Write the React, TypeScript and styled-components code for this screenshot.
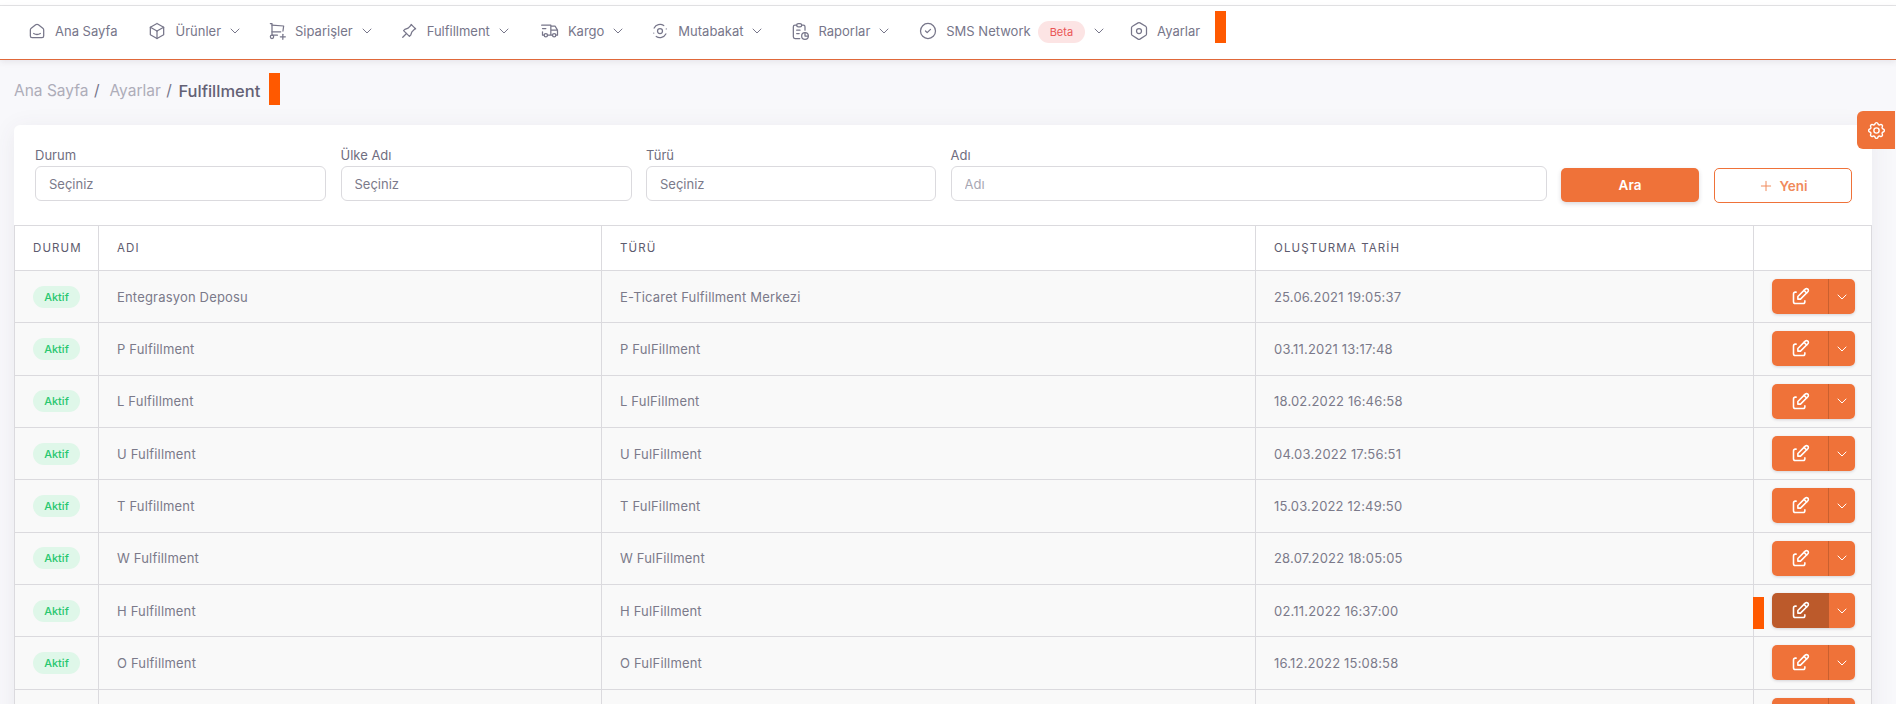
import { ReactNode } from "react";
import styled, { createGlobalStyle } from "styled-components";
import {
  TbSmartHome,
  TbBox,
  TbShoppingCartPlus,
  TbPin,
  TbTruckDelivery,
  TbReport,
  TbCircleCheck,
  TbChevronDown,
  TbSettings,
  TbSettings2,
  TbEdit,
  TbPlus,
} from "react-icons/tb";

const GlobalStyle = createGlobalStyle`
  html, body {
    margin: 0;
    padding: 0;
    height: 704px;
    overflow: hidden;
    background: #f8f8fb;
    font-family: Inter, "Liberation Sans", sans-serif;
    color: #7b7a8a;
  }
`;

const Page = styled.div`
  position: relative;
  width: 1896px;
  height: 704px;
  overflow: hidden;
`;

const TopStrip = styled.div`
  height: 5px;
  background: #fff;
  border-bottom: 1px solid #e4e4e6;
`;

const Nav = styled.nav`
  position: relative;
  display: flex;
  align-items: center;
  box-sizing: content-box;
  height: 49px;
  padding: 0 0 4px 27px;
  background: #fff;
  border-bottom: 1px solid #e0683a;
  box-shadow: 0 2px 6px rgba(75, 70, 92, 0.1);
`;

const NavItem = styled.div<{ $gap: number }>`
  display: flex;
  align-items: center;
  margin-right: ${({ $gap }) => $gap}px;
  font-size: 13px;
  color: #77768a;
  white-space: nowrap;

  > svg:first-child {
    width: 20px;
    height: 20px;
    margin-right: 8px;
    stroke-width: 1.5;
  }
`;

const Caret = styled(TbChevronDown)`
  width: 16px;
  height: 16px;
  margin-left: 6px;
  stroke-width: 1.5;
`;

const BetaBadge = styled.span`
  margin: 2px 0 0 7px;
  padding: 0 12px;
  height: 22px;
  line-height: 22px;
  border-radius: 11px;
  background: #fce4e4;
  color: #ea5455;
  font-size: 11px;
`;

const Marker = styled.div`
  width: 11px;
  height: 32px;
  background: #ff5900;
`;

const NavMarker = styled(Marker)`
  margin-bottom: 7px;
`;

const Breadcrumb = styled.div`
  display: flex;
  align-items: center;
  gap: 9px;
  height: 32px;
  margin-top: 13px;
  padding-left: 14px;
`;

const Trail = styled.div`
  display: flex;
  align-items: center;
  gap: 5.5px;
  margin-top: 3px;
  font-size: 15.5px;
  color: #75748a;
`;

const CrumbLink = styled.span`
  color: #aeadb9;
`;

const CrumbCurrent = styled.span`
  margin-left: 1px;
  font-size: 16.5px;
  font-weight: 500;
  color: #636175;
`;

const Card = styled.section`
  width: 1858px;
  margin: 20px 0 0 14px;
  background: #fff;
  border-radius: 6px 6px 0 0;
  box-shadow: 0 4px 24px rgba(75, 70, 92, 0.08);
`;

const Filters = styled.div`
  display: flex;
  align-items: flex-end;
  height: 100px;
  padding: 0 20px 24px 21px;
  box-sizing: border-box;
`;

const Field = styled.label<{ $width: number }>`
  display: flex;
  flex: none;
  flex-direction: column;
  gap: 3px;
  width: ${({ $width }) => $width}px;
  margin-right: 14.5px;
  font-size: 13px;
  color: #6f6e80;
`;

const Input = styled.input`
  box-sizing: border-box;
  width: 100%;
  height: 35px;
  padding: 0 13px;
  border: 1px solid #dbdade;
  border-radius: 6px;
  background: #fff;
  font: 13px Inter, "Liberation Sans", sans-serif;
  color: #7b7a8a;
  outline: none;

  &::placeholder {
    color: #a8a7b3;
  }
`;

const SearchButton = styled.button`
  flex: none;
  width: 138px;
  height: 34px;
  margin: 0 15px -1px 0;
  border: 0;
  border-radius: 5px;
  background: #ef7239;
  box-shadow: 0 2px 4px rgba(75, 70, 92, 0.2);
  color: #fff;
  font: 600 13.5px Inter, "Liberation Sans", sans-serif;
`;

const NewButton = styled.button`
  display: flex;
  flex: none;
  align-items: center;
  justify-content: center;
  gap: 5px;
  width: 138px;
  height: 35px;
  margin-bottom: -2px;
  border: 1px solid #ef7239;
  border-radius: 5px;
  background: #fff;
  color: #f08a5c;
  font: 600 13.5px Inter, "Liberation Sans", sans-serif;

  svg {
    width: 16px;
    height: 16px;
    stroke-width: 1.5;
  }
`;

const Table = styled.table`
  width: 1858px;
  table-layout: fixed;
  border-collapse: collapse;
  font-size: 13px;

  th,
  td {
    border: 1px solid #dbdade;
    padding: 0 18px;
    text-align: left;
  }

  th {
    height: 44px;
    font-size: 11.5px;
    font-weight: 400;
    letter-spacing: 1.1px;
    color: #5d5b6e;
  }

  td {
    height: 51.33px;
    background: #f9f9f9;
    color: #7b7a8a;
    letter-spacing: 0.18px;
  }

  th:first-child,
  td:first-child {
    padding: 0 0 0 18px;
  }
`;

const StatusBadge = styled.span`
  display: block;
  width: 47px;
  height: 22px;
  line-height: 22px;
  border-radius: 11px;
  background: #dff7e9;
  color: #28c76f;
  font-size: 11px;
  font-weight: 500;
  letter-spacing: 0;
  text-align: center;
`;

const ActionGroup = styled.div`
  display: flex;
  width: 83px;
  height: 35px;
  border-radius: 5px;
  overflow: hidden;
  box-shadow: 0 1px 3px rgba(75, 70, 92, 0.2);
`;

const EditButton = styled.button<{ $hover?: boolean }>`
  display: flex;
  align-items: center;
  justify-content: center;
  width: 57px;
  padding: 0;
  border: 0;
  border-right: 1px solid ${({ $hover }) => ($hover ? "#bc5a2b" : "#c9602f")};
  background: ${({ $hover }) => ($hover ? "#bc5a2b" : "#ef7239")};
  color: #fff;

  svg {
    width: 21px;
    height: 21px;
    stroke-width: 1.8;
  }
`;

const MenuButton = styled.button`
  display: flex;
  align-items: center;
  justify-content: center;
  flex: 1;
  padding: 0;
  border: 0;
  background: #ef7239;
  color: #fff;

  svg {
    width: 16px;
    height: 16px;
    stroke-width: 1.5;
  }
`;

const RowMarker = styled(Marker)`
  position: absolute;
  left: 1753px;
  top: 597px;
`;

const SettingsTab = styled.div`
  position: absolute;
  left: 1857px;
  top: 111px;
  display: flex;
  align-items: center;
  justify-content: center;
  width: 38px;
  height: 38px;
  border-radius: 6px 0 0 6px;
  background: #ef7239;
  color: #fff;

  svg {
    width: 21px;
    height: 21px;
    stroke-width: 1.6;
  }
`;

// mutabakat: broken ring round a small circle
const ReconcileIcon = () => (
  <svg viewBox="0 0 24 24" fill="none" stroke="currentColor" strokeLinecap="round" strokeLinejoin="round">
    <circle cx="12" cy="12" r="3" />
    <path d="M5 8.5a8 8 0 0 1 11.5 -3" />
    <path d="M19 15.5a8 8 0 0 1 -11.5 3" />
    <path d="M19.5 9.5v.01" />
    <path d="M4.5 14.5v.01" />
  </svg>
);

type MenuEntry = { icon: ReactNode; label: string; caret?: boolean; beta?: boolean; gap: number };

const menu: MenuEntry[] = [
  { icon: <TbSmartHome />, label: "Ana Sayfa", gap: 30 },
  { icon: <TbBox />, label: "Ürünler", caret: true, gap: 24 },
  { icon: <TbShoppingCartPlus />, label: "Siparişler", caret: true, gap: 24 },
  { icon: <TbPin />, label: "Fulfillment", caret: true, gap: 28 },
  { icon: <TbTruckDelivery />, label: "Kargo", caret: true, gap: 24 },
  { icon: <ReconcileIcon />, label: "Mutabakat", caret: true, gap: 25 },
  { icon: <TbReport />, label: "Raporlar", caret: true, gap: 26 },
  { icon: <TbCircleCheck />, label: "SMS Network", caret: true, beta: true, gap: 22 },
  { icon: <TbSettings2 />, label: "Ayarlar", gap: 15 },
];

const rows = [
  ["Entegrasyon Deposu", "E-Ticaret Fulfillment Merkezi", "25.06.2021 19:05:37"],
  ["P Fulfillment", "P FulFillment", "03.11.2021 13:17:48"],
  ["L Fulfillment", "L FulFillment", "18.02.2022 16:46:58"],
  ["U Fulfillment", "U FulFillment", "04.03.2022 17:56:51"],
  ["T Fulfillment", "T FulFillment", "15.03.2022 12:49:50"],
  ["W Fulfillment", "W FulFillment", "28.07.2022 18:05:05"],
  ["H Fulfillment", "H FulFillment", "02.11.2022 16:37:00"],
  ["O Fulfillment", "O FulFillment", "16.12.2022 15:08:58"],
  ["", "", ""],
];

export default function App() {
  return (
    <Page>
      <GlobalStyle />
      <TopStrip />
      <Nav>
        {menu.map((item) => (
          <NavItem key={item.label} $gap={item.gap}>
            {item.icon}
            {item.label}
            {item.beta && <BetaBadge>Beta</BetaBadge>}
            {item.caret && <Caret />}
          </NavItem>
        ))}
        <NavMarker />
      </Nav>

      <Breadcrumb>
        <Trail>
          <CrumbLink>Ana Sayfa</CrumbLink> /<CrumbLink>&nbsp;Ayarlar</CrumbLink> /
          <CrumbCurrent>Fulfillment</CrumbCurrent>
        </Trail>
        <Marker />
      </Breadcrumb>

      <Card>
        <Filters>
          <Field $width={291}>
            Durum
            <Input readOnly value="Seçiniz" />
          </Field>
          <Field $width={291}>
            Ülke Adı
            <Input readOnly value="Seçiniz" />
          </Field>
          <Field $width={290}>
            Türü
            <Input readOnly value="Seçiniz" />
          </Field>
          <Field $width={596}>
            Adı
            <Input placeholder="Adı" />
          </Field>
          <SearchButton>Ara</SearchButton>
          <NewButton>
            <TbPlus />
            Yeni
          </NewButton>
        </Filters>

        <Table>
          <colgroup>
            <col style={{ width: 84 }} />
            <col style={{ width: 503 }} />
            <col style={{ width: 654 }} />
            <col style={{ width: 498 }} />
            <col />
          </colgroup>
          <thead>
            <tr>
              <th>DURUM</th>
              <th>ADI</th>
              <th>TÜRÜ</th>
              <th>OLUŞTURMA TARİH</th>
              <th />
            </tr>
          </thead>
          <tbody>
            {rows.map(([name, type, date], i) => (
              <tr key={i}>
                <td>{name && <StatusBadge>Aktif</StatusBadge>}</td>
                <td>{name}</td>
                <td>{type}</td>
                <td>{date}</td>
                <td>
                  <ActionGroup>
                    <EditButton $hover={name === "H Fulfillment"}>
                      <TbEdit />
                    </EditButton>
                    <MenuButton>
                      <TbChevronDown />
                    </MenuButton>
                  </ActionGroup>
                </td>
              </tr>
            ))}
          </tbody>
        </Table>
      </Card>

      <RowMarker />
      <SettingsTab>
        <TbSettings />
      </SettingsTab>
    </Page>
  );
}
